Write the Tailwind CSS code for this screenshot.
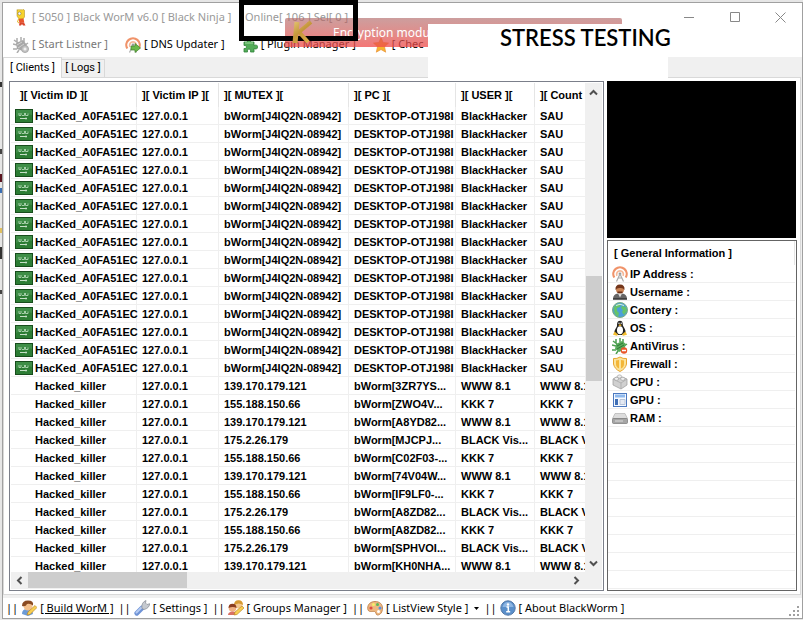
<!DOCTYPE html>
<html lang="en">
<head>
<meta charset="utf-8">
<title>Black WorM v6.0</title>
<script src="https://cdn.jsdelivr.net/npm/@tailwindcss/browser@4"></script>
</head>
<body class="relative h-screen overflow-hidden bg-[#e6e6e6] pt-[2px] pb-px pl-[2px] font-['Noto_Sans','Open_Sans',sans-serif] text-[11px] text-black">
<svg width="0" height="0" class="absolute" aria-hidden="true">
  <defs>
    <linearGradient id="gold" gradientUnits="userSpaceOnUse" x1="0" y1="0" x2="20" y2="25"><stop offset="0" stop-color="#ecd080"/><stop offset=".5" stop-color="#c4963a"/><stop offset="1" stop-color="#e3b54c"/></linearGradient>
    <symbol id="flag" viewBox="0 0 18 14"><rect width="18" height="14" fill="#174d1c"/><rect x="1" y="1" width="16" height="12" fill="#2c7d34"/><path d="M1 1h16v5Q8 3 1 8z" fill="#5aa763" opacity=".4"/><path d="M4 4v2.500h2V4m1 2.500h2.500V4M10.500 4v2.500H13V4.500" fill="none" stroke="#a5cfa9" stroke-width="1"/><path d="M5 9.500h7M11 8.500v2" stroke="#c5dfc7" stroke-width="1"/></symbol>
    <symbol id="cast" viewBox="0 0 16 16"><path d="M2.300 11.500A6.700 6.700 0 1 1 13.700 11.500" fill="none" stroke="#f0936a" stroke-width="2.200"/><path d="M5 9.800A3.400 3.400 0 1 1 11 9.800" fill="none" stroke="#f6b898" stroke-width="1.700"/><circle cx="8" cy="8" r="1.400" fill="#999"/><path d="M8 8 4.500 15.500M8 8l3.500 7.500M6.200 12h3.600" fill="none" stroke="#aaa" stroke-width="1.200"/></symbol>
    <symbol id="user" viewBox="0 0 16 16"><path d="M1 15q0-5 5-5.500h4q5 .5 5 5.500z" fill="#666"/><path d="m6 9.500 2 4 2-4z" fill="#ddd"/><circle cx="8" cy="5.500" r="4" fill="#c98355"/><path d="M3.500 6Q3 .5 8 .5T12.500 6Q11 3.500 8 4 5 3.500 3.500 6z" fill="#74361b"/><path d="M5.500 7.500h5v1.500h-5z" fill="#6b3018"/><path d="M1 15h14" stroke="#333" stroke-width="1.500"/></symbol>
    <symbol id="globe" viewBox="0 0 16 16"><circle cx="8" cy="8" r="7.500" fill="#4b9fd8" stroke="#7cae81"/><path d="M2 5q3-4 7-3l-1 3-3 1v3l2 2-1 4Q1 12 2 5zm8-1 4 1 1 4-3 4-2-3 1-2-2-2z" fill="#65c36a"/><path d="M4 3.500Q8 1 12 3.500" stroke="#d7f2e0" fill="none"/></symbol>
    <symbol id="tux" viewBox="0 0 16 16"><path d="M8 .8c3 0 2.600 3 3 5 1 2 3 4 2.500 7L10 15H6l-3.500-2C2 10 4.500 8 5 6c.2-2.200 0-5.200 3-5.200z" fill="#222"/><ellipse cx="8" cy="10.300" rx="3" ry="4" fill="#fff"/><path d="M6.300 5 8 4.300 9.800 5 8 6.500z" fill="#f0b428"/><circle cx="7" cy="3.300" r=".7" fill="#fff"/><circle cx="9.200" cy="3.300" r=".7" fill="#fff"/><path d="m2.500 11.500 3.500 3-1 1.200-4-1zm11 0L10 14.500l1 1.200 4-1z" fill="#f3bd2e"/></symbol>
    <symbol id="bug" viewBox="0 0 16 16"><path d="M4 1v4M8 0v4M11 1v4M0 7l4 1M1 3l4 3M0 12h4M15 6l-3 2M4 16l2-3" stroke="#4b9f50" stroke-width="1.500"/><path d="m4 6 6-3 4 3-2 6-5 2-4-3z" fill="#58a95b"/><path d="m5 8 6-3m-6 6 7-4" stroke="#2f7a35"/></symbol>
    <symbol id="spider" viewBox="0 0 16 16"><path d="M4 1v4M8 0v4M11 1v4M0 7l4 1M1 3l4 3M0 12h4M15 6l-3 2M4 16l2-3" stroke="#adadad" stroke-width="1.500"/><path d="m3 6 7-3 4 5-4 6-6-2z" fill="#a8a8a8"/><path d="m4 8 5-3m-4 6 6-4" stroke="#d0d0d0"/><circle cx="12" cy="12" r="3.500" fill="#c4c4c4" stroke="#aaa"/><path d="M10.500 12h3M12 10.500v3" stroke="#fff"/></symbol>
    <symbol id="shield" viewBox="0 0 16 16"><path d="M1.500 2.500Q5 3 8 1q3 2 6.500 1.500V8q-1 5-6.500 7.500Q2.500 13 1.500 8z" fill="#fbe39a" stroke="#e8a52d"/><path d="M4 4.500 7 4v8.500Q4 11 4 8zm5-.5 3 .5V8q0 3-3 4.500z" fill="#f3b637"/></symbol>
    <symbol id="cube" viewBox="0 0 16 16"><path d="m1 5 6-3 8 3v6l-6 4-8-4z" fill="#d0d0d0" stroke="#999" stroke-width=".7"/><path d="m1 5 8 4 6-4M9 9v6" stroke="#aaa" stroke-width=".8" fill="none"/><ellipse cx="4.500" cy="4.800" rx="2.200" ry="1.600" fill="#eee" stroke="#999" stroke-width=".6"/><ellipse cx="10.800" cy="4.800" rx="2.200" ry="1.600" fill="#eee" stroke="#999" stroke-width=".6"/><ellipse cx="7.500" cy="2.500" rx="2.200" ry="1.600" fill="#eee" stroke="#999" stroke-width=".6"/></symbol>
    <symbol id="pane" viewBox="0 0 16 16"><rect x="1.500" y="1.500" width="13" height="13" fill="#f5f9ff" stroke="#4c79c0"/><path d="M3 4h10" stroke="#8fb9ed" stroke-width="3"/><path d="M3 7h3v6H3z" fill="#3f6fb6"/><path d="M8 7.500h5v5H8z" fill="#e4e9f2" stroke="#b8c4d8"/></symbol>
    <symbol id="drive" viewBox="0 0 16 16"><path d="m3 3.500h10l2.500 5h-15z" fill="#ddd" stroke="#aaa" stroke-width=".6"/><rect x=".5" y="8.500" width="15" height="5" rx="1" fill="#a5a5a5" stroke="#777" stroke-width=".7"/><path d="M3 11h8" stroke="#ddd"/></symbol>
    <symbol id="builder" viewBox="0 0 16 16"><path d="M1 14q0-5 5-5l5 1 1 4-5 2z" fill="#6c9bd6"/><circle cx="7" cy="6" r="4.500" fill="#f4c08c"/><path d="M1 6Q1 .5 7 .5t5 5Q9 3 6 4 5 7 1 6z" fill="#8a4b22"/><path d="m6 15 1-3 7-6.500 2 2-7 7z" fill="#f8cf52" stroke="#b47c1e" stroke-width=".6"/></symbol>
    <symbol id="group" viewBox="0 0 16 16"><circle cx="10.500" cy="4.500" r="4" fill="#f4c88f"/><path d="M6 5Q6 .3 10.500.3T15 5Q11 2 6 5z" fill="#d69a33"/><circle cx="4.500" cy="8" r="3.800" fill="#efb184"/><path d="M.5 8Q.5 3.700 4.500 3.700T8.500 8Q5 6 .5 8z" fill="#8b3e20"/><path d="M0 15q0-3 4-3.500l4 .5v3z" fill="#d97164"/><path d="m6 15 1-3 7-6 2 2-7 6.500z" fill="#f8cf52" stroke="#b47c1e" stroke-width=".6"/></symbol>
    <symbol id="wrench" viewBox="0 0 16 16"><path d="m2.800 13.200 5.500-5.500" stroke="#6f93d6" stroke-width="4.800" stroke-linecap="round"/><path d="m2.500 12.500 5-5" stroke="#b5cbf3" stroke-width="2" stroke-linecap="round"/><path d="M8 8.500q-1-6 4-8L11.500 3l1.500 1.500 2.800-.8Q15 8.500 10 9.500z" fill="#c5c9cf" stroke="#858a92" stroke-width=".7"/></symbol>
    <symbol id="palette" viewBox="0 0 16 16"><path d="M8 1.500c5 0 7.500 3 7.500 6.500 0 4-2 7-5 7-2 0-1-3-3-3.500S1 13 .7 8.500C.5 4 4 1.500 8 1.500z" fill="#edb780" stroke="#b9763b" stroke-width=".8"/><circle cx="4" cy="8" r="1.600" fill="#e14b3d"/><circle cx="6.500" cy="4.500" r="1.500" fill="#f5ef66"/><circle cx="10.500" cy="4.500" r="1.500" fill="#57b85a"/><circle cx="13" cy="8" r="1.500" fill="#5b8fe0"/><circle cx="11.500" cy="11.500" r="1.500" fill="#fff"/></symbol>
    <symbol id="info" viewBox="0 0 16 16"><circle cx="8" cy="8" r="7.200" fill="#5a8fca" stroke="#5479a8"/><path d="M2.500 7Q4 2 8 2t5.500 5z" fill="#8db5e2"/><circle cx="8" cy="4.500" r="1.200" fill="#fff"/><path d="M6.500 7H8.300v4.500M6.200 11.700h4" stroke="#fff" stroke-width="1.500" fill="none"/></symbol>
    <symbol id="puzzle" viewBox="0 0 16 16"><path d="M2 5h3.500Q4 1.500 7 1.500T8.500 5H12v3.500q3.500-1.500 3.500 1.500T12 11.500V15H8.500q1-3-1.500-3t-1.500 3H2v-3.500q2.500.8 2.500-1.500T2 8.500z" fill="#54ad59" stroke="#2f8238" stroke-width=".8"/><path d="M3 6h8" stroke="#a4dca3"/></symbol>
    <symbol id="star" viewBox="0 0 16 16"><path d="m8 .8 2.200 4.700 5.300.6-4 3.600 1.200 5.500L8 12.500l-4.700 2.700 1.200-5.500-4-3.600 5.300-.6z" fill="#f8b32f" stroke="#e8913a" stroke-width=".7"/></symbol>
    <symbol id="bart" viewBox="0 0 12 17"><path d="m2 .5 1 .8L4 .3l1 1 1-1 1 1 1-1 1.500 1V8L8 10H4L2 7z" fill="#f6d22c" stroke="#a9861b" stroke-width=".5"/><circle cx="4.500" cy="4.500" r="1.500" fill="#fff" stroke="#444" stroke-width=".4"/><path d="m3.500 10 5-.5.8 4-4.800.5z" fill="#e8542d"/><path d="m3.500 10-1 3 1.500 1" stroke="#e4b92a" fill="none"/><path d="M4.500 13.500h4.500l1.500 3H8l-1-1.500-1 1.500H4z" fill="#d9462c"/></symbol>
  </defs>
</svg>

<!-- Slivers of the desktop behind the window -->
<div class="absolute inset-y-0 left-0 w-[2px]" aria-hidden="true">
  <div class="mt-[82px] h-[5px] bg-[#333]"></div><div class="mt-[62px] h-[5px] bg-[#444]"></div>
  <div class="mt-[20px] h-[8px] bg-[#5b1420]"></div><div class="mt-[6px] h-[5px] bg-[#3b6fb5]"></div>
  <div class="mt-[35px] h-[5px] bg-[#e0c060]"></div><div class="mt-[14px] h-[12px] bg-[#333]"></div><div class="mt-[31px] h-[4px] bg-[#444]"></div>
</div>

<main class="flex h-full flex-col border border-[#a0a0a0] bg-white">
  <header class="flex h-[28px] shrink-0 items-center pl-[12px] text-[#999]">
    <svg class="mr-[5px] h-[17px] w-[12px]"><use href="#bart"/></svg>
    <h1 class="w-[213px] whitespace-pre">[ 5050 ] Black WorM v6.0 [ Black Ninja ]</h1><span class="whitespace-pre">Online[ 106 ] Sel[ 0 ]</span>
    <div class="ml-auto flex">
      <button aria-label="Minimize" class="flex h-[28px] w-[46px] items-center justify-center"><svg width="10" height="10"><path d="M0 5.500h10" stroke="#888"/></svg></button>
      <button aria-label="Maximize" class="flex h-[28px] w-[46px] items-center justify-center"><svg width="10" height="10"><path d="M.5.5h9v9h-9z" fill="none" stroke="#888"/></svg></button>
      <button aria-label="Close" class="flex h-[28px] w-[44px] items-center justify-center"><svg width="11" height="11"><path d="m.5.5 10 10m0-10-10 10" stroke="#888"/></svg></button>
    </div>
  </header>

  <nav class="flex h-[26px] shrink-0 items-center gap-[17px] pt-px pl-[10px] whitespace-nowrap">
    <button class="flex items-center gap-[3px] text-[#777]"><svg class="size-[16px]"><use href="#spider"/></svg>[ Start Listner ]</button>
    <button class="flex items-center gap-[3px]"><svg width="16" height="16"><use href="#cast"/><path d="M6 9h4V6.500l5.500 4.500-5.500 4.500V13H6z" fill="#6db848" stroke="#3c7f2a" stroke-width=".7"/></svg>[ DNS Updater ]</button>
    <button class="flex items-center gap-[3px]"><svg class="size-[16px]"><use href="#puzzle"/></svg>[ Plugin Manager ]</button>
    <button class="flex items-center gap-[3px]"><svg class="size-[16px]"><use href="#star"/></svg>[ Chec</button>
  </nav>

  <section class="flex min-h-0 flex-1 flex-col bg-[#f0f0f0]">
    <div class="flex h-[20px] shrink-0 items-end font-['Roboto',sans-serif] text-[11px]" role="tablist">
      <button role="tab" aria-selected="true" class="relative z-10 -mb-px h-[21px] w-[59px] border border-b-0 border-[#d9d9d9] bg-white">[ Clients ]</button>
      <button role="tab" aria-selected="false" class="h-[18px] w-[43px] border border-b-0 border-l-0 border-[#d9d9d9]">[ Logs ]</button>
    </div>
    <div class="mr-px mb-[3px] flex min-h-0 flex-1 gap-[3px] border border-[#d9d9d9] bg-white pt-[3px] pr-[3px] pb-[3px] pl-[5px] font-['Liberation_Sans',Arial,sans-serif] text-[11px] font-bold">
      <div class="grid min-w-0 flex-1 grid-cols-[minmax(0,1fr)_17px] grid-rows-[minmax(0,1fr)_17px] border border-[#7b7f8a] bg-white p-px">
        <div class="overflow-hidden">
          <table class="w-[640px] table-fixed border-separate border-spacing-0 whitespace-nowrap">
            <colgroup><col class="w-[126px]"><col class="w-[82px]"><col class="w-[130px]"><col class="w-[107px]"><col class="w-[79px]"><col class="w-[116px]"></colgroup>
            <thead><tr class="h-[24px] text-left">
              <th class="border-r border-[#e5e5e5] pl-[9px]">][ Victim ID ][</th><th class="border-r border-[#e5e5e5] pl-[5px]">][ Victim IP ][</th><th class="border-r border-[#e5e5e5] pl-[5px]">][ MUTEX ][</th><th class="border-r border-[#e5e5e5] pl-[5px]">][ PC ][</th><th class="border-r border-[#e5e5e5] pl-[5px]">][ USER ][</th><th class="pl-[5px]">][ Count</th>
            </tr></thead>
            <tbody id="rows"></tbody>
          </table>
        </div>
        <div class="flex flex-col items-center bg-[#f0f0f0]">
          <button aria-label="Scroll up" class="flex h-[18px] w-full items-center justify-center"><svg width="9" height="7"><path d="m1 5.500 3.500-3.500L8 5.500" fill="none" stroke="#505050" stroke-width="2"/></svg></button>
          <div class="flex w-full flex-1 flex-col"><div class="grow-[175]"></div><div class="ml-px grow-[106] bg-[#cdcdcd]"></div><div class="grow-[174]"></div></div>
          <button aria-label="Scroll down" class="flex h-[17px] w-full items-center justify-center"><svg width="9" height="7"><path d="m1 1.500 3.500 3.500L8 1.500" fill="none" stroke="#505050" stroke-width="2"/></svg></button>
        </div>
        <div class="flex bg-[#f0f0f0]">
          <button aria-label="Scroll left" class="flex w-[17px] items-center justify-center"><svg width="7" height="9"><path d="M5.500 1 2 4.500 5.500 8" fill="none" stroke="#505050" stroke-width="2"/></svg></button>
          <div class="flex flex-1"><div class="mb-px w-[159px] bg-[#cdcdcd]"></div></div>
          <button aria-label="Scroll right" class="flex w-[17px] items-center justify-center"><svg width="7" height="9"><path d="M1.500 1 5 4.500 1.500 8" fill="none" stroke="#505050" stroke-width="2"/></svg></button>
        </div>
        <div class="bg-[#f0f0f0]"></div>
      </div>

      <aside class="flex w-[190px] shrink-0 flex-col gap-[2px]">
        <div class="mr-px h-[157px] shrink-0 bg-black"></div>
        <div class="min-h-0 flex-1 overflow-hidden border border-[#646464] pr-px">
          <h2 class="flex h-[24px] items-center border-r border-[#e5e5e5] pl-[6px]">[ General Information ]</h2>
          <ul id="facts"></ul>
        </div>
      </aside>
    </div>
  </section>

  <footer class="flex h-[20px] shrink-0 items-center gap-[3px] pl-[3px] whitespace-nowrap">
    <span>||</span>
    <button class="flex items-center gap-[3px] underline"><svg class="size-[16px]"><use href="#builder"/></svg>[ Build WorM ]</button>
    <span class="pl-[2px]">||</span>
    <button class="flex items-center gap-[3px]"><svg class="size-[16px]"><use href="#wrench"/></svg>[ Settings ]</button>
    <span class="pl-[2px]">||</span>
    <button class="flex items-center gap-[3px]"><svg class="size-[16px]"><use href="#group"/></svg>[ Groups Manager ]</button>
    <span class="pl-[2px]">||</span>
    <button class="flex items-center gap-[3px]"><svg class="size-[16px]"><use href="#palette"/></svg>[ ListView Style ]<svg class="ml-[3px]" width="5" height="3"><path d="M0 0h5L2.500 3z"/></svg></button>
    <span class="pl-[2px]">||</span>
    <button class="flex items-center gap-[3px]"><svg class="size-[16px]"><use href="#info"/></svg>[ About BlackWorm ]</button>
    <svg class="ml-auto self-end" width="13" height="13" fill="#a0a0a0"><path d="M8 1h2v2H8zM4 5h2v2H4zM8 5h2v2H8zM0 9h2v2H0zM4 9h2v2H4zM8 9h2v2H8z"/></svg>
  </footer>
</main>

<!-- Notification and caption floating over the window -->
<div class="absolute top-[18px] left-[285px] h-[29px] w-[337px] rounded-t-[2px] bg-linear-to-b from-[#b06a6a]/65 to-[#f04848]/75"></div>
<span class="absolute top-[24px] left-[333px] text-[12px] leading-[18px] text-white">Encryption modu</span>
<div class="absolute top-0 left-[239px] h-[41px] w-[119px] border-5 border-black"></div>
<svg class="absolute top-[19px] left-[291px]" width="22" height="26" fill="none" stroke="url(#gold)"><path d="M6 3 4 24" stroke-width="5"/><path d="M20 3 8 13l9 10" stroke-width="4"/></svg>
<div class="absolute top-[24px] left-[428px] h-[56px] w-[240px] bg-white pl-[72px] font-['Lato',sans-serif] text-[22px] leading-[27px] font-semibold whitespace-nowrap">STRESS TESTING</div>

<script>
const hosts = Array(15).fill(['HacKed_A0FA51EC','127.0.0.1','bWorm[J4IQ2N-08942]','DESKTOP-OTJ198I','BlackHacker','SAU']);
const ips = ['139.170.179.121','155.188.150.66','139.170.179.121','175.2.26.179','155.188.150.66','139.170.179.121','155.188.150.66','175.2.26.179','155.188.150.66','175.2.26.179','139.170.179.121'];
const pcs = ['3ZR7YS','ZWO4V','A8YD82','MJCPJ','C02F03-','74V04W','IF9LF0-','A8ZD82','A8ZD82','SPHVOI','KH0NHA'];
const users = {'139.170.179.121':['WWW 8.1','WWW 8.1'],'155.188.150.66':['KKK 7','KKK 7'],'175.2.26.179':['BLACK Vis...','BLACK V']};
ips.forEach((ip,i)=>hosts.push(['Hacked_killer','127.0.0.1',ip,`bWorm[${pcs[i]}...`,...users[ip]]));
document.getElementById('rows').innerHTML = hosts.map((r,n)=>'<tr class="h-[18px]">'+r.map((c,i)=> i===0
  ? `<td class="border-r border-b border-[#efefef] pl-[4px]"><div class="flex items-center gap-[2px]">${n<15?'<svg class="h-[14px] w-[18px] shrink-0"><use href="#flag"/></svg>':'<span class="w-[18px]"></span>'}<span class="pt-px leading-[16px]">${c}</span></div></td>`
  : `<td class="border-r border-b border-[#efefef] pt-px pl-[5px] leading-[16px]">${c}</td>`).join('')+'</tr>').join('');
const facts = [['cast','IP Address :'],['user','Username :'],['globe','Contery :'],['tux','OS :'],['bug','AntiVirus :'],['shield','Firewall :'],['cube','CPU :'],['pane','GPU :'],['drive','RAM :']];
while (facts.length < 18) facts.push(null);
document.getElementById('facts').innerHTML = facts.map(f=>`<li class="flex h-[18px] items-center gap-[2px] border-b border-[#efefef] pl-[4px]">${f?`<svg class="size-[16px] shrink-0" viewBox="0 0 16 16"><use href="#${f[0]}"/>${f[0]==='bug'?'<circle cx="12" cy="12.500" r="3.200" fill="#e9562b"/><path d="M10 12.500h4" stroke="#fff" stroke-width="1.500"/>':''}</svg><span class="pt-px leading-[16px]">${f[1]}</span>`:''}</li>`).join('');
</script>
</body>
</html>
